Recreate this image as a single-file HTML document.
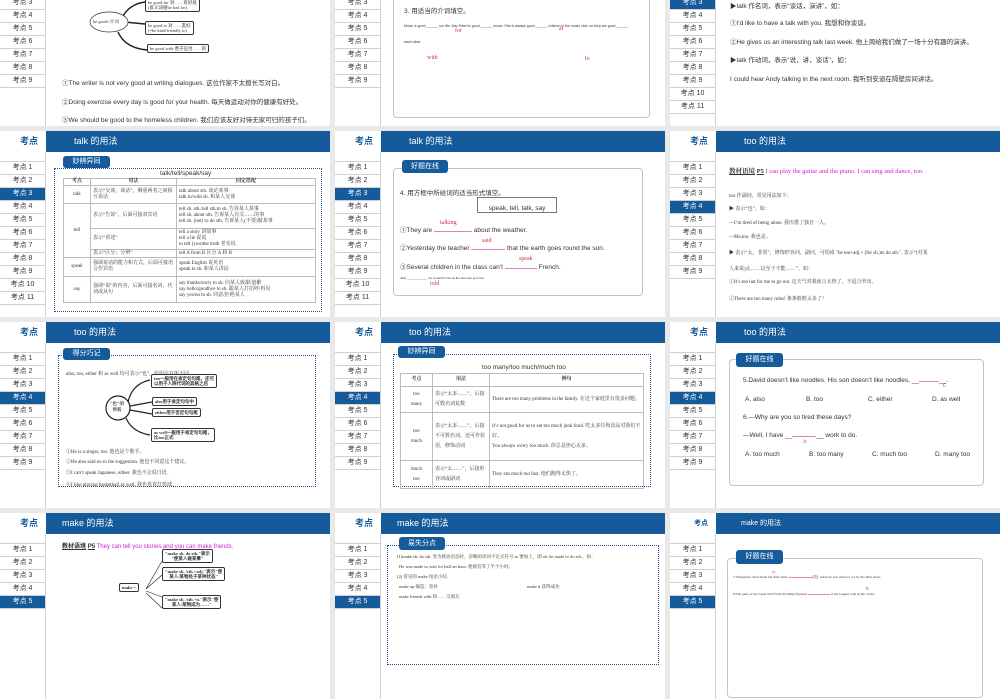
<!DOCTYPE html><html><head><meta charset="utf-8"><style>
*{margin:0;padding:0;box-sizing:border-box}
body{width:1000px;height:600px;background:#e9e9e9;position:relative;overflow:hidden;font-family:"Liberation Sans","Noto Sans CJK SC",sans-serif;color:#333}
.s{position:absolute;width:330px;height:186px;background:#fff;overflow:hidden}
.hd{position:absolute;left:46px;top:0;right:0;height:21px;background:#155a9a;color:#fff;font-size:9px;line-height:21px;padding-left:28px}
.kd{position:absolute;left:0;top:0;width:38px;text-align:right;font-size:9px;font-weight:bold;color:#155a9a;line-height:21px}
.sb{position:absolute;left:0;top:21px;width:46px;height:170px;border-right:1px solid #d0d0d0}
.sb div{height:13px;border-bottom:1px solid #d0d0d0;font-size:7px;text-align:center;line-height:12px;color:#333}
.sb .e{height:10px}
.sb .on{background:#155a9a;color:#fff}
.a{position:absolute;white-space:nowrap}
.t{font-size:6.5px}
.tab{position:absolute;background:#155a9a;color:#fff;font-size:7px;text-align:center;border-radius:3px;line-height:12px;height:12px}
.dot{position:absolute;border:1px dotted #2a4a8a}
.rb{position:absolute;border:1px solid #b8c6d8;border-radius:4px}
.red{color:#d0304a;font-family:"Liberation Serif",serif}
.mag{color:#d020d0}
.ul{border-bottom:1px solid #e080c0;display:inline-block}
.serif{font-family:"Liberation Serif","Noto Serif CJK SC",serif}
table{border-collapse:collapse;position:absolute;font-family:"Liberation Serif","Noto Serif CJK SC",serif}
td{border:1px solid #bbb;font-size:5px;vertical-align:middle;padding:0 2px;line-height:6px}
.bx{position:absolute;border:1px solid #333;border-radius:2px;background:#fff;font-size:4.5px;line-height:5px;padding:1px 2px;font-family:"Liberation Serif",serif}
</style></head><body>

<!-- ROW 1 -->
<div class="s" style="left:0;top:-60px">
<div class="hd">good 的用法</div><div class="kd">考点</div>
<div class="sb"><div class="e"></div><div>考点 1</div><div>考点 2</div><div>考点 3</div><div>考点 4</div><div>考点 5</div><div>考点 6</div><div>考点 7</div><div>考点 8</div><div>考点 9</div></div>
<svg class="a" style="left:0;top:0" width="330" height="186"><path d="M123 76 Q130 64 145 62 M124 82 L145 84 M118 92 Q125 108 147 110" stroke="#222" stroke-width="1.5" fill="none"/><ellipse cx="109" cy="82" rx="19" ry="10" fill="#fff" stroke="#333" stroke-width=".7"/></svg>
<div class="a serif" style="left:93px;top:79px;font-size:4.5px">be good+介词</div>
<div class="bx" style="left:145px;top:58px">be good for 对……有好处<br>(反义词组be bad for)</div>
<div class="bx" style="left:145px;top:81px">be good to 对……友好<br>(=be kind/friendly to)</div>
<div class="bx" style="left:147px;top:104px">be good with 善于应付……的</div>
<div class="a t" style="left:62px;top:137px">①The writer is not very good at writing dialogues. 这位作家不太擅长写对白。</div>
<div class="a t" style="left:62px;top:156px">②Doing exercise every day is good for your health. 每天做运动对你的健康有好处。</div>
<div class="a t" style="left:62px;top:174px">③We should be good to the homeless children. 我们应该友好对待无家可归的孩子们。</div>
<div class="a t" style="left:62px;top:194px">④Anne is good with children. 安妮会和孩子打交道。</div>
</div>

<div class="s" style="left:335px;top:-60px">
<div class="hd">good 的用法</div><div class="kd">考点</div>
<div class="sb"><div class="e"></div><div>考点 1</div><div>考点 2</div><div>考点 3</div><div>考点 4</div><div>考点 5</div><div>考点 6</div><div>考点 7</div><div>考点 8</div><div>考点 9</div></div>
<div class="rb" style="left:58px;top:30px;width:257px;height:148px"></div>
<div class="a t" style="left:69px;top:65px">3. 用适当的介词填空。</div>
<div class="a" style="left:69px;top:84px;font-size:3.5px">Music is good ______ our life. Max Reed is good ______ music. She is always good ______ children in the music club, so they are good ______</div>
<div class="a" style="left:69px;top:100px;font-size:3.5px">each other.</div>
<div class="a red" style="left:120px;top:88px;font-size:6px">for</div>
<div class="a red" style="left:224px;top:86px;font-size:6px">at</div>
<div class="a red" style="left:92px;top:115px;font-size:6px">with</div>
<div class="a red" style="left:250px;top:116px;font-size:6px">to</div>
</div>

<div class="s" style="left:670px;top:-60px">
<div class="hd">talk 的用法</div><div class="kd">考点</div>
<div class="sb"><div class="e"></div><div>考点 1</div><div>考点 2</div><div class="on">考点 3</div><div>考点 4</div><div>考点 5</div><div>考点 6</div><div>考点 7</div><div>考点 8</div><div>考点 9</div><div>考点 10</div><div>考点 11</div></div>
<div class="a t" style="left:60px;top:60px">▶talk 作名词，表示“谈话，演讲”，如：</div>
<div class="a t" style="left:60px;top:77px">①I’d like to have a talk with you. 我想和你谈谈。</div>
<div class="a t" style="left:60px;top:96px">②He gives us an interesting talk last week. 他上周给我们做了一场十分有趣的演讲。</div>
<div class="a t" style="left:60px;top:114px">▶talk 作动词，表示“说，讲，谈话”，如：</div>
<div class="a t" style="left:60px;top:133px">I could hear Andy talking in the next room. 我听到安迪在隔壁房间讲话。</div>
</div>

<!-- ROW 2 -->
<div class="s" style="left:0;top:131px">
<div class="hd">talk 的用法</div><div class="kd">考点</div>
<div class="sb"><div class="e"></div><div>考点 1</div><div>考点 2</div><div class="on">考点 3</div><div>考点 4</div><div>考点 5</div><div>考点 6</div><div>考点 7</div><div>考点 8</div><div>考点 9</div><div>考点 10</div><div>考点 11</div></div>
<div class="dot" style="left:54px;top:37px;width:268px;height:144px"></div>
<div class="tab" style="left:63px;top:25px;width:47px">妙辨异同</div>
<div class="a" style="left:160px;top:39px;font-size:6.5px">talk/tell/speak/say</div>
<table style="left:63px;top:47px;width:253px">
<tr style="height:7px"><td style="width:27px;text-align:center;font-weight:bold">考点</td><td style="width:86px;text-align:center;font-weight:bold">用法</td><td style="text-align:center;font-weight:bold">固定搭配</td></tr>
<tr style="height:18px"><td style="text-align:center">talk</td><td>表示“交谈，谈话”，侧重两者之间相互说话</td><td>talk about sth. 谈论某事<br>talk to/with sb. 和某人交谈</td></tr>
<tr style="height:25px"><td rowspan="3" style="text-align:center">tell</td><td>表示“告诉”，后面可接双宾语</td><td>tell sb. sth./tell sth.to sb. 告诉某人某事<br>tell sb. about sth. 告诉某人有关……的事<br>tell sb. (not) to do sth. 告诉某人(不要)做某事</td></tr>
<tr style="height:21px"><td>表示“讲述”</td><td>tell a story 讲故事<br>tell a lie 说谎<br>to tell (you)the truth 老实说</td></tr>
<tr style="height:8px"><td>表示“区分；分辨”</td><td>tell A from B 区分 A 和 B</td></tr>
<tr style="height:19px"><td style="text-align:center">speak</td><td>强调说话的能力和方式，后面可接语言作宾语</td><td>speak English 说英语<br>speak to sb. 和某人讲话</td></tr>
<tr style="height:26px"><td style="text-align:center">say</td><td>强调“说”的内容，后面可接名词、代词或从句</td><td>say thanks/sorry to sb. 向某人致谢/道歉<br>say hello/goodbye to sb. 跟某人打招呼/再见<br>say yes/no to sb. 同意/拒绝某人</td></tr>
</table>
</div>

<div class="s" style="left:335px;top:131px">
<div class="hd">talk 的用法</div><div class="kd">考点</div>
<div class="sb"><div class="e"></div><div>考点 1</div><div>考点 2</div><div class="on">考点 3</div><div>考点 4</div><div>考点 5</div><div>考点 6</div><div>考点 7</div><div>考点 8</div><div>考点 9</div><div>考点 10</div><div>考点 11</div></div>
<div class="rb" style="left:58px;top:37px;width:250px;height:128px"></div>
<div class="tab" style="left:67px;top:29px;width:46px;height:13px;line-height:13px">好题在线</div>
<div class="a t" style="left:65px;top:56px">4. 用方框中所给词的适当形式填空。</div>
<div class="a" style="left:142px;top:66px;width:80px;height:16px;border:1px solid #777;font-size:6.5px;text-align:center;padding-top:7px">speak, tell, talk, say</div>
<div class="a t" style="left:65px;top:93px">①They are <span class="ul" style="width:38px"></span> about the weather.</div>
<div class="a red" style="left:105px;top:89px;font-size:6px">talking</div>
<div class="a t" style="left:65px;top:111px">②Yesterday the teacher <span class="ul" style="width:34px"></span> that the earth goes round the sun.</div>
<div class="a red" style="left:147px;top:107px;font-size:6px">said</div>
<div class="a t" style="left:65px;top:130px">③Several children in the class can’t <span class="ul" style="width:32px"></span> French.</div>
<div class="a red" style="left:184px;top:125px;font-size:6px">speak</div>
<div class="a" style="left:65px;top:145px;font-size:3px">Jack ____________ me to wait for him at the bus stop just now.</div>
<div class="a red" style="left:95px;top:150px;font-size:6px">told</div>
</div>

<div class="s" style="left:670px;top:131px">
<div class="hd">too 的用法</div><div class="kd">考点</div>
<div class="sb"><div class="e"></div><div>考点 1</div><div>考点 2</div><div>考点 3</div><div class="on">考点 4</div><div>考点 5</div><div>考点 6</div><div>考点 7</div><div>考点 8</div><div>考点 9</div></div>
<div class="a serif" style="left:59px;top:35px;font-size:6.5px"><b style="text-decoration:underline">教材语境</b> <b style="text-decoration:underline">P5</b> <span class="mag">I can play the guitar and the piano. I can sing and dance, too.</span></div>
<div class="a serif" style="left:59px;top:61px;font-size:5px">too 作副词，常见用法如下：</div>
<div class="a serif" style="left:59px;top:74px;font-size:5px">▶ 表示“也”，如：</div>
<div class="a serif" style="left:59px;top:88px;font-size:5px">—I’m tired of being alone. 我厌倦了独自一人。</div>
<div class="a serif" style="left:59px;top:102px;font-size:5px">—Me,too. 我也是。</div>
<div class="a serif" style="left:59px;top:118px;font-size:5px">▶ 表示“太，非常”，修饰形容词、副词，可构成 "be too+adj.+ (for sb.)to do sth.", 表示“(对某</div>
<div class="a serif" style="left:59px;top:134px;font-size:5px">人来说)太……以至于不能……”。如：</div>
<div class="a serif" style="left:59px;top:147px;font-size:5px">①It’s too hot for me to go out. 这天气对我而言太热了，不适合外出。</div>
<div class="a serif" style="left:59px;top:164px;font-size:5px">②There are too many rules! 条条框框太多了！</div>
</div>

<!-- ROW 3 -->
<div class="s" style="left:0;top:322px">
<div class="hd">too 的用法</div><div class="kd">考点</div>
<div class="sb"><div class="e"></div><div>考点 1</div><div>考点 2</div><div>考点 3</div><div class="on">考点 4</div><div>考点 5</div><div>考点 6</div><div>考点 7</div><div>考点 8</div><div>考点 9</div></div>
<div class="dot" style="left:58px;top:33px;width:258px;height:132px"></div>
<div class="tab" style="left:63px;top:26px;width:47px">得分巧记</div>
<div class="a serif" style="left:66px;top:48px;font-size:5px">also, too, either 和 as well 均可表示“也”，但用法有所不同。</div>
<svg class="a" style="left:0;top:0" width="330" height="186"><path d="M128 80 Q132 62 150 58 M130 84 L152 80 M130 88 L152 92 M126 96 Q132 110 150 113" stroke="#222" stroke-width="1.2" fill="none"/><circle cx="118" cy="86" r="12" fill="#fff" stroke="#222" stroke-width="1.2"/></svg>
<div class="a serif" style="left:110px;top:79px;font-size:4.5px;text-align:center;font-weight:bold;line-height:6px">"也"的<br>辨析</div>
<div class="bx" style="left:151px;top:52px;font-weight:bold">too一般用在肯定句句尾，还可<br>以用于人称代词的宾格之后</div>
<div class="bx" style="left:152px;top:75px;font-weight:bold">also用于肯定句句中</div>
<div class="bx" style="left:152px;top:86px;font-weight:bold">either用于否定句句尾</div>
<div class="bx" style="left:151px;top:106px;font-weight:bold">as well一般用于肯定句句尾，<br>比too正式</div>
<div class="a serif" style="left:66px;top:126px;font-size:5px">①He is a singer, too. 他也是个歌手。</div>
<div class="a serif" style="left:66px;top:136px;font-size:5px">②He also said no to the suggestion. 他也不同意这个建议。</div>
<div class="a serif" style="left:66px;top:147px;font-size:5px">③I can’t speak Japanese, either. 我也不会说日语。</div>
<div class="a serif" style="left:66px;top:159px;font-size:5px">④I like playing basketball as well. 我也喜欢打篮球。</div>
</div>

<div class="s" style="left:335px;top:322px">
<div class="hd">too 的用法</div><div class="kd">考点</div>
<div class="sb"><div class="e"></div><div>考点 1</div><div>考点 2</div><div>考点 3</div><div class="on">考点 4</div><div>考点 5</div><div>考点 6</div><div>考点 7</div><div>考点 8</div><div>考点 9</div></div>
<div class="dot" style="left:58px;top:32px;width:258px;height:133px"></div>
<div class="tab" style="left:63px;top:24px;width:47px">妙辨异同</div>
<div class="a" style="left:147px;top:42px;font-size:6.5px">too many/too much/much too</div>
<table style="left:65px;top:51px;width:244px">
<tr style="height:13px"><td style="width:32px;text-align:center;font-weight:bold">考点</td><td style="width:57px;text-align:center;font-weight:bold">用法</td><td style="text-align:center;font-weight:bold">例句</td></tr>
<tr style="height:26px"><td style="text-align:center;line-height:10px">too<br>many</td><td style="line-height:10px">表示“太多……”，后接可数名词复数</td><td style="line-height:10px">There are too many problems in the family. 在这个家庭里有很多问题。</td></tr>
<tr style="height:48px"><td style="text-align:center;line-height:10px">too<br>much</td><td style="line-height:10px">表示“太多……”，后接不可数名词，还可作状语，修饰动词</td><td style="line-height:10px">It’s not good for us to eat too much junk food. 吃太多垃圾食品对我们不好。<br>You always worry too much. 你总是担心太多。</td></tr>
<tr style="height:28px"><td style="text-align:center;line-height:10px">much<br>too</td><td style="line-height:10px">表示“太……”，后接形容词或副词</td><td>They ran much too fast. 他们跑得太快了。</td></tr>
</table>
</div>

<div class="s" style="left:670px;top:322px">
<div class="hd">too 的用法</div><div class="kd">考点</div>
<div class="sb"><div class="e"></div><div>考点 1</div><div>考点 2</div><div>考点 3</div><div class="on">考点 4</div><div>考点 5</div><div>考点 6</div><div>考点 7</div><div>考点 8</div><div>考点 9</div></div>
<div class="rb" style="left:59px;top:37px;width:255px;height:127px"></div>
<div class="tab" style="left:66px;top:31px;width:47px;height:14px;line-height:14px">好题在线</div>
<div class="a t" style="left:73px;top:55px">5.David doesn’t like noodles. His son doesn’t like noodles, __<span class="ul" style="width:20px"></span>__.</div>
<div class="a red" style="left:273px;top:62px;font-size:5px">C</div>
<div class="a t" style="left:75px;top:74px">A. also</div><div class="a t" style="left:136px;top:74px">B. too</div><div class="a t" style="left:198px;top:74px">C. either</div><div class="a t" style="left:262px;top:74px">D. as well</div>
<div class="a t" style="left:73px;top:92px">6.—Why are you so tired these days?</div>
<div class="a t" style="left:73px;top:110px">—Well, I have __<span class="ul" style="width:24px"></span>__ work to do.</div>
<div class="a red" style="left:133px;top:118px;font-size:5px">A</div>
<div class="a t" style="left:75px;top:129px">A. too much</div><div class="a t" style="left:139px;top:129px">B. too many</div><div class="a t" style="left:202px;top:129px">C. much too</div><div class="a t" style="left:265px;top:129px">D. many too</div>
</div>

<!-- ROW 4 -->
<div class="s" style="left:0;top:513px">
<div class="hd" style="padding-left:16px">make 的用法</div><div class="kd">考点</div>
<div class="sb"><div class="e"></div><div>考点 1</div><div>考点 2</div><div>考点 3</div><div>考点 4</div><div class="on">考点 5</div></div>
<div class="a" style="left:62px;top:28px;font-size:6px"><b style="text-decoration:underline">教材语境</b> <b style="text-decoration:underline">P5</b> <span class="mag">They can tell you stories,and you can make friends.</span></div>
<svg class="a" style="left:0;top:0" width="330" height="186"><path d="M146 76 L162 48 M146 76 L162 62 M146 78 L162 84 M146 80 L162 95" stroke="#222" stroke-width=".6" fill="none"/></svg>
<div class="bx" style="left:162px;top:36px;text-align:center;font-weight:bold">"make sb. do sth."表示<br>"使某人做某事"</div>
<div class="bx" style="left:162px;top:54px;text-align:center;font-weight:bold">"make sb. /sth.+adj."表示"使<br>某人/某物处于某种状态"</div>
<div class="bx" style="left:119px;top:70px;font-weight:bold">make +</div>
<div class="bx" style="left:162px;top:82px;text-align:center;font-weight:bold">"make sb. /sth.+n."表示"使<br>某人/某物成为……"</div>
</div>

<div class="s" style="left:335px;top:513px">
<div class="hd" style="padding-left:16px">make 的用法</div><div class="kd">考点</div>
<div class="sb"><div class="e"></div><div>考点 1</div><div>考点 2</div><div>考点 3</div><div>考点 4</div><div class="on">考点 5</div></div>
<div class="dot" style="left:52px;top:32px;width:272px;height:120px"></div>
<div class="tab" style="left:64px;top:24px;width:46px;height:13px;line-height:13px">易失分点</div>
<div class="a serif" style="left:62px;top:41px;font-size:4.5px">(1)make sb. do sth. 变为被动语态时，省略的动词不定式符号 to 要加上，即 sb. be made to do sth.。如：</div>
<div class="a serif" style="left:64px;top:51px;font-size:4.5px">He was made to wait for half an hour. 他被迫等了半个小时。</div>
<div class="a serif" style="left:62px;top:61px;font-size:4.5px">(2) 常见的 make 短语小结：</div>
<div class="a serif" style="left:64px;top:71px;font-size:4.5px">make up 编造；弥补</div>
<div class="a serif" style="left:192px;top:71px;font-size:4.5px">make it 获得成功</div>
<div class="a serif" style="left:64px;top:81px;font-size:4.5px">make friends with 和……交朋友</div>
</div>

<div class="s" style="left:670px;top:513px">
<div class="hd" style="font-size:7px;padding-left:25px">make 的用法</div><div class="kd" style="font-size:7px">考点</div>
<div class="sb"><div class="e"></div><div>考点 1</div><div>考点 2</div><div>考点 3</div><div>考点 4</div><div class="on">考点 5</div></div>
<div class="rb" style="left:57px;top:45px;width:256px;height:140px"></div>
<div class="tab" style="left:66px;top:37px;width:47px;height:14px;line-height:14px">好题在线</div>
<div class="a serif" style="left:63px;top:62px;font-size:3.5px">7.Though he often made his little sister c<span class="ul" style="width:22px"></span>(哭), today he was made to cry by his little sister.</div>
<div class="a red" style="left:102px;top:56px;font-size:4px">ry</div>
<div class="a serif" style="left:63px;top:79px;font-size:3.5px">8.The parts of the Great Wall from the Ming Dynasty <span class="ul" style="width:22px"></span> it the longest wall in the world.</div>
<div class="a red" style="left:196px;top:73px;font-size:4px">B</div>
</div>

</body></html>
